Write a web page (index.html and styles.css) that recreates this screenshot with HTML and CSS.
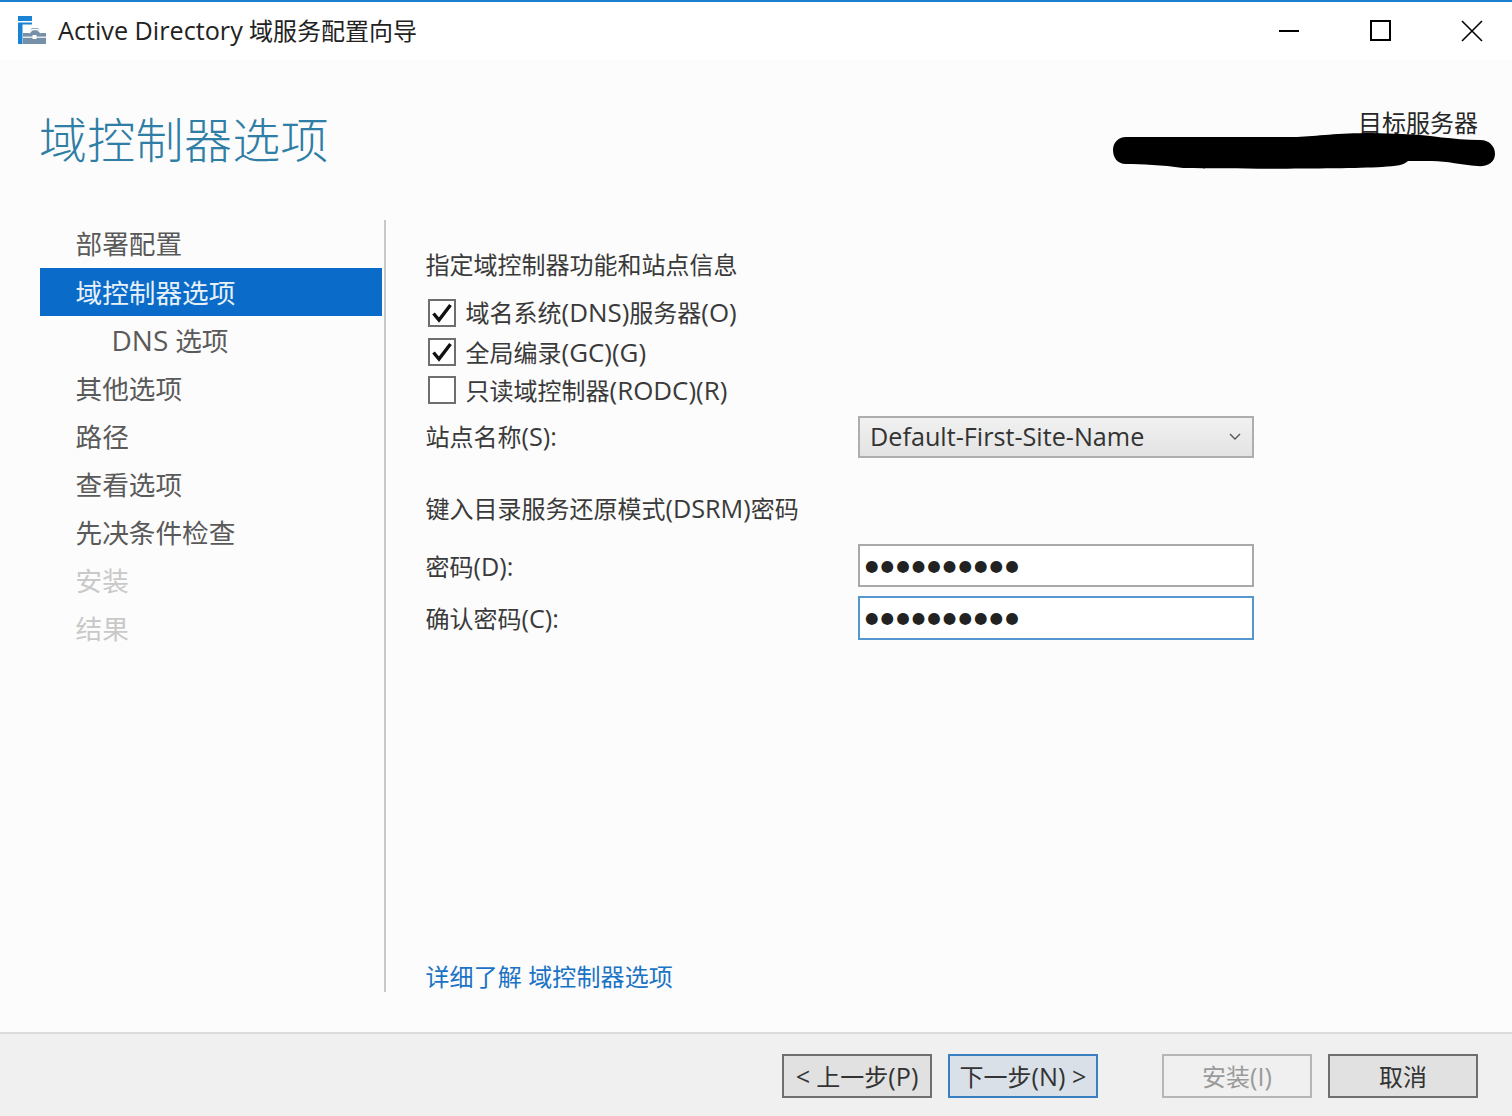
FILE: index.html
```html
<!DOCTYPE html>
<html lang="zh-CN">
<head>
<meta charset="utf-8">
<title>Active Directory 域服务配置向导</title>
<link rel="stylesheet" href="styles.css">
</head>
<body>
<div class="window">
  <div class="titlebar">
    <svg class="app-icon" width="30" height="30" viewBox="0 0 30 30">
      <rect x="0" y="0" width="14" height="5" fill="#1a83d4"/>
      <rect x="0" y="6.5" width="14" height="2" fill="#1a83d4"/>
      <rect x="0" y="8" width="4.5" height="20" fill="#1a83d4"/>
      <path d="M5 17h6l3-5h6l3 5h5v11H5z" fill="#7790a9"/>
      <path d="M11 17l3.5-3.5h5L23 17" fill="none" stroke="#fff" stroke-width="1.4"/>
      <rect x="5" y="20.5" width="23" height="1.5" fill="#dfe6ec"/>
      <rect x="14.5" y="19" width="4" height="4" fill="#fff"/>
    </svg>
    <span class="app-title"><span class="lat">Active Directory</span> 域服务配置向导</span>
    <div class="win-controls">
      <svg width="22" height="22" viewBox="0 0 22 22"><path d="M0 11h20" stroke="#000" stroke-width="2"/></svg>
      <svg width="22" height="22" viewBox="0 0 22 22"><rect x="1" y="1" width="19" height="19" fill="none" stroke="#000" stroke-width="2"/></svg>
      <svg width="22" height="22" viewBox="0 0 22 22"><path d="M1 1l20 20M21 1L1 21" stroke="#000" stroke-width="1.6"/></svg>
    </div>
  </div>

  <div class="header">
    <h1 class="page-title">域控制器选项</h1>
    <div class="target">目标服务器</div>
    <svg class="redaction" width="384" height="40" viewBox="0 0 384 40">
      <path d="M14 6L185 6C205 5 225 2 260 2L290 3C320 4 340 9 368 9C378 9 383 16 383 23C383 31 376 36 365 35C350 34 335 30 320 30L296 30C292 34 285 35 270 36C230 38 130 38 71 37C50 34 30 33 14 33C5 33 1 26 1 19C1 12 6 6 14 6Z" fill="#000"/>
    </svg>
  </div>

  <div class="main">
    <nav class="nav">
      <div class="nav-item first">部署配置</div>
      <div class="nav-item active">域控制器选项</div>
      <div class="nav-item sub"><span class="lat">DNS</span> 选项</div>
      <div class="nav-item">其他选项</div>
      <div class="nav-item">路径</div>
      <div class="nav-item">查看选项</div>
      <div class="nav-item">先决条件检查</div>
      <div class="nav-item disabled">安装</div>
      <div class="nav-item disabled">结果</div>
    </nav>
    <div class="divider"></div>
    <section class="content">
      <div class="section-heading">指定域控制器功能和站点信息</div>
      <div class="check-row r1">
        <span class="box"><svg width="24" height="24" viewBox="0 0 24 24"><path d="M3.5 12.5l5.5 6.5L20.5 4" fill="none" stroke="#111" stroke-width="3.4"/></svg></span>
        <span>域名系统<span class="lat wide">(DNS)</span>服务器<span class="lat wide">(O)</span></span>
      </div>
      <div class="check-row r2">
        <span class="box"><svg width="24" height="24" viewBox="0 0 24 24"><path d="M3.5 12.5l5.5 6.5L20.5 4" fill="none" stroke="#111" stroke-width="3.4"/></svg></span>
        <span class="nudge">全局编录<span class="lat wide">(GC)(G)</span></span>
      </div>
      <div class="check-row r3">
        <span class="box"></span>
        <span class="nudge">只读域控制器<span class="lat wide">(RODC)(R)</span></span>
      </div>
      <div class="form-row site-row">
        <span class="label raise">站点名称<span class="lat">(S):</span></span>
        <div class="select">
          <span class="lat">Default-First-Site-Name</span>
          <svg width="12" height="8" viewBox="0 0 12 8"><path d="M1 1l5 5 5-5" fill="none" stroke="#555" stroke-width="1.4"/></svg>
        </div>
      </div>
      <div class="section-heading dsrm">键入目录服务还原模式<span class="lat">(DSRM)</span>密码</div>
      <div class="form-row pw-row">
        <span class="label">密码<span class="lat">(D):</span></span>
        <div class="input"><span class="dots">●●●●●●●●●●</span></div>
      </div>
      <div class="form-row pw-row2">
        <span class="label raise-small">确认密码<span class="lat">(C):</span></span>
        <div class="input focused"><span class="dots">●●●●●●●●●●</span></div>
      </div>
      <a class="more-link" href="#">详细了解 域控制器选项</a>
    </section>
  </div>

  <div class="footer">
    <button class="btn"><span class="lat">&lt;</span> 上一步<span class="lat">(P)</span></button>
    <button class="btn default">下一步<span class="lat">(N) &gt;</span></button>
    <button class="btn off">安装<span class="lat">(I)</span></button>
    <button class="btn">取消</button>
  </div>
</div>
</body>
</html>
```
FILE: styles.css
```css
* { box-sizing: border-box; }
html, body { margin: 0; padding: 0; }
body {
  font-family: "Open Sans", "Noto Sans CJK SC", sans-serif;
  color: #3a3a3a;
  background: #fcfcfc;
}
.lat { font-size: 1.05em; line-height: 1; }
.lat.wide { font-size: 1.08em; }
.window {
  width: 1512px;
  height: 1116px;
  display: flex;
  flex-direction: column;
  border-top: 2px solid #1a7fcf;
  overflow: hidden;
}
.titlebar {
  height: 58px;
  flex: none;
  background: #fff;
  display: flex;
  align-items: center;
  padding-left: 18px;
  font-size: 24px;
  color: #222;
}
.app-icon { margin: 0 10px 0 0; flex: none; }
.app-title { line-height: 58px; }
.win-controls {
  margin-left: auto;
  display: flex;
  gap: 69px;
  padding-right: 29px;
  align-items: center;
}
.header {
  height: 160px;
  flex: none;
  position: relative;
  display: flex;
  justify-content: space-between;
  padding: 0 34px 0 39px;
}
.page-title {
  margin: 48px 0 0;
  font-size: 48px;
  line-height: 64px;
  font-weight: 300;
  letter-spacing: 0.3px;
  color: #2e7ea6;
}
.target {
  margin-top: 46px;
  font-size: 24px;
  line-height: 34px;
  color: #262626;
}
.redaction { position: absolute; left: 1112px; top: 71px; }
.main { flex: 1; display: flex; min-height: 0; }
.nav { width: 342px; margin-left: 40px; flex: none; }
.nav-item {
  height: 48px;
  line-height: 50px;
  padding-left: 35.5px;
  font-size: 26.67px;
  color: #5a5a5a;
}
.nav-item.first { line-height: 48px; }
.nav-item.active { background: #0a6cc8; color: #e8f1fa; }
.nav-item.sub { padding-left: 71.5px; }
.nav-item.disabled { color: #c9c9c9; }
.divider {
  width: 2px;
  height: 772px;
  margin-left: 2px;
  background: #c8c8c8;
  flex: none;
}
.content {
  flex: 1;
  padding: 25px 0 0 39.5px;
  font-size: 24px;
  color: #3a3a3a;
  display: flex;
  flex-direction: column;
}
.section-heading { height: 40px; line-height: 40px; }
.check-row {
  display: flex;
  align-items: center;
  gap: 9.5px;
  height: 28px;
  line-height: 28px;
  margin-left: 2.5px;
}
.check-row.r1 { margin-top: 14px; }
.check-row.r2 { margin-top: 11px; }
.check-row.r3 { margin-top: 10px; }
.nudge { padding-top: 2px; }
.box {
  width: 28px;
  height: 28px;
  flex: none;
  border: 2px solid #6e6e6e;
  background: #fff;
  display: flex;
  align-items: center;
  justify-content: center;
}
.form-row { display: flex; align-items: center; }
.label { width: 432.5px; flex: none; }
.label.raise { margin-bottom: 4px; }
.label.raise-small { margin-bottom: 2px; }
.site-row { margin-top: 12px; }
.select {
  width: 396px;
  height: 42px;
  border: 2px solid #aeaeae;
  background: linear-gradient(#f1f1f1, #e3e3e3);
  display: flex;
  align-items: center;
  justify-content: space-between;
  padding: 0 11px 0 10px;
  color: #333;
  font-size: 24px;
}
.dsrm { margin-top: 31px; }
.input {
  width: 396px;
  height: 43px;
  border: 2px solid #a9a9a9;
  background: #fff;
  display: flex;
  align-items: center;
  padding-left: 5px;
}
.input.focused { border-color: #5596cf; height: 44px; }
.dots {
  font-family: "DejaVu Sans", sans-serif;
  font-size: 15.5px;
  letter-spacing: 2.05px;
  color: #222;
}
.pw-row { margin-top: 15px; }
.pw-row2 { margin-top: 9px; }
.more-link {
  margin-top: 317px;
  color: #1a73c4;
  text-decoration: none;
  line-height: 40px;
  letter-spacing: 0.1px;
}
.footer {
  height: 84px;
  flex: none;
  background: #f0f0f0;
  border-top: 2px solid #dcdcdc;
  display: flex;
  align-items: flex-start;
  justify-content: flex-end;
  gap: 16px;
  padding: 20px 34px 0 0;
}
.btn {
  width: 150px;
  height: 44px;
  padding: 0 0 2px;
  font: inherit;
  font-size: 24px;
  color: #333;
  background: #e1e1e1;
  border: 2px solid #6f6f6f;
}
.btn.default { border-color: #3a7fbf; background: #d9e0e8; }
.btn.off { border-color: #b6b6b6; background: #f0f0f0; color: #9a9a9a; margin-left: 48px; }
```
